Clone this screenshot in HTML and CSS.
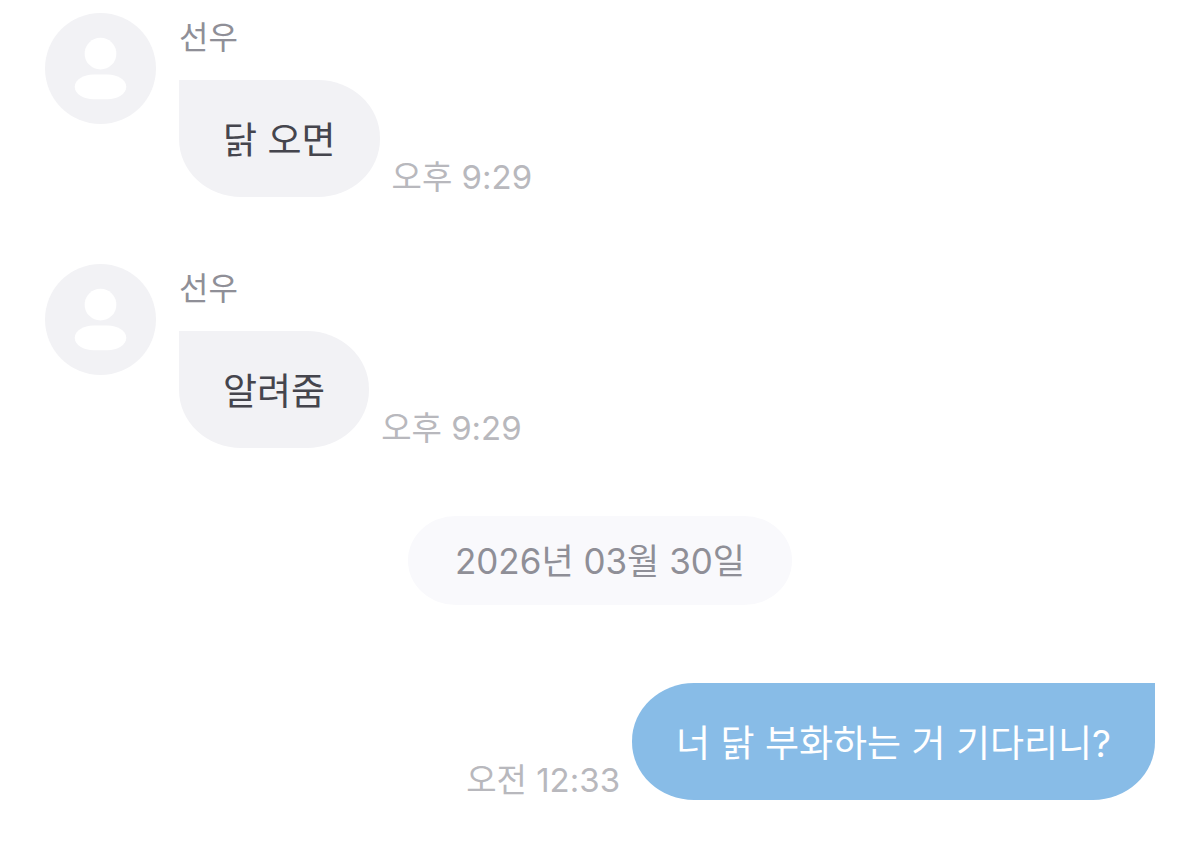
FILE: index.html
```
<!DOCTYPE html>
<html lang="ko">
<head>
    <meta charset="UTF-8">
    <meta name="viewport" content="width=device-width, initial-scale=1.0">
    <title>채팅</title>
    <link rel="stylesheet" href="styles.css">
</head>
<body>
    <main class="chat">
        <article class="message">
            <svg class="avatar" viewBox="0 0 112 112" aria-hidden="true">
                <circle cx="56" cy="56" r="56" fill="#f2f2f5"/>
                <circle cx="56" cy="41" r="16" fill="#fff"/>
                <path d="M49 62H63C73 62 82 67 82 74.500S73 87 63 87H49C39 87 30 82 30 74.500S39 62 49 62Z" fill="#fff"/>
            </svg>
            <div class="content">
                <div class="name">선우</div>
                <div class="row">
                    <p class="bubble">닭 오면</p>
                    <time class="time">오후 9:29</time>
                </div>
            </div>
        </article>
        <article class="message">
            <svg class="avatar" viewBox="0 0 112 112" aria-hidden="true">
                <circle cx="56" cy="56" r="56" fill="#f2f2f5"/>
                <circle cx="56" cy="41" r="16" fill="#fff"/>
                <path d="M49 62H63C73 62 82 67 82 74.500S73 87 63 87H49C39 87 30 82 30 74.500S39 62 49 62Z" fill="#fff"/>
            </svg>
            <div class="content">
                <div class="name">선우</div>
                <div class="row">
                    <p class="bubble">알려줌</p>
                    <time class="time">오후 9:29</time>
                </div>
            </div>
        </article>
        <div class="date"><time datetime="2026-03-30">2026년 03월 30일</time></div>
        <article class="row mine">
            <time class="time">오전 12:33</time>
            <p class="bubble">너 닭 부화하는 거 기다리니?</p>
        </article>
    </main>
</body>
</html>
```
FILE: styles.css
```
* {
    box-sizing: border-box;
}
body {
    margin: 0;
    background: #fff;
    font-family: Inter, "Noto Sans CJK KR", sans-serif;
}
.chat {
    padding: 13px 45px 56px;
}
.message {
    display: flex;
    align-items: flex-start;
    gap: 23px;
    margin-bottom: 67px;
}
.avatar {
    flex: none;
    width: 111px;
    height: 111px;
}
.name {
    height: 67px;
    line-height: 49px;
    font-size: 32px;
    color: #8f8f97;
}
.row {
    display: flex;
    align-items: flex-end;
    gap: 12px;
}
.bubble {
    margin: 0;
    padding: 36px 44px 32px;
    border-radius: 0 62px 62px 62px / 0 58px 58px 58px;
    background: #f2f2f5;
    color: #45454d;
    font-size: 37px;
    line-height: 49px;
}
.time {
    color: #b8b8bd;
    font-size: 33px;
    line-height: 40px;
}
.date {
    width: fit-content;
    margin: 68px auto 78px;
    padding: 21px 47px 20px;
    border-radius: 48px / 44px;
    background: #f9f9fc;
    color: #8f8f97;
    font-size: 35px;
    line-height: 48px;
}
.mine {
    justify-content: flex-end;
}
.mine .bubble {
    border-radius: 62px 0 62px 62px / 58px 0 58px 58px;
    background: #88bce7;
    color: #fff;
}
```
